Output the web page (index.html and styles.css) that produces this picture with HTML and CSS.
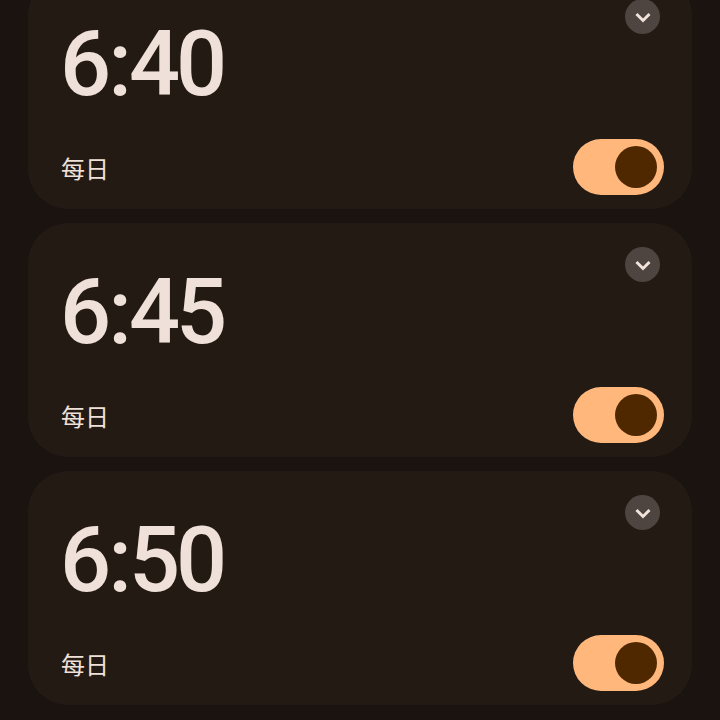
FILE: index.html
```html
<!DOCTYPE html>
<html lang="zh">
<head>
  <meta charset="UTF-8" />
  <meta name="viewport" content="width=device-width, initial-scale=1" />
  <title>闹钟</title>
  <link rel="stylesheet" href="styles.css">
</head>
<body>
  <div class="alarm-list">
    <div class="alarm-card">
      <div class="alarm-top">
        <div class="alarm-time">6<span class="colon">:</span>40</div>
        <button class="expand-btn" title="展开">
          <svg width="20" height="20" viewBox="0 0 20 20"><path d="M3.5 7 L10 13.5 L16.5 7" fill="none" stroke="#f1e2da" stroke-width="3"/></svg>
        </button>
      </div>
      <div class="alarm-bottom">
        <span class="alarm-days">每日</span>
        <div class="toggle on"><div class="thumb"></div></div>
      </div>
    </div>

    <div class="alarm-card">
      <div class="alarm-top">
        <div class="alarm-time">6<span class="colon">:</span>45</div>
        <button class="expand-btn" title="展开">
          <svg width="20" height="20" viewBox="0 0 20 20"><path d="M3.5 7 L10 13.5 L16.5 7" fill="none" stroke="#f1e2da" stroke-width="3"/></svg>
        </button>
      </div>
      <div class="alarm-bottom">
        <span class="alarm-days">每日</span>
        <div class="toggle on"><div class="thumb"></div></div>
      </div>
    </div>

    <div class="alarm-card">
      <div class="alarm-top">
        <div class="alarm-time">6<span class="colon">:</span>50</div>
        <button class="expand-btn" title="展开">
          <svg width="20" height="20" viewBox="0 0 20 20"><path d="M3.5 7 L10 13.5 L16.5 7" fill="none" stroke="#f1e2da" stroke-width="3"/></svg>
        </button>
      </div>
      <div class="alarm-bottom">
        <span class="alarm-days">每日</span>
        <div class="toggle on"><div class="thumb"></div></div>
      </div>
    </div>
  </div>
</body>
</html>
```

FILE: styles.css
```css
body {
  margin: 0;
  background: #1a130f;
  color: #efe1d9;
  font-family: "Roboto", "Noto Sans CJK SC", sans-serif;
  overflow: hidden;
}

.alarm-list {
  display: flex;
  flex-direction: column;
  gap: 14px;
  padding: 0 28px;
  margin-top: -25px;
}

.alarm-card {
  background: #241a14;
  border-radius: 40px;
  height: 234px;
  box-sizing: border-box;
  padding: 24px 28px 14px 32px;
  display: flex;
  flex-direction: column;
  justify-content: space-between;
}

.alarm-top {
  display: flex;
  justify-content: space-between;
  align-items: flex-start;
}

.alarm-time {
  font-size: 90px;
  line-height: 1;
  font-weight: 500;
  letter-spacing: -4px;
  margin-top: 21px;
}

.colon {
  margin: 0 1px;
}

.expand-btn {
  width: 35px;
  height: 35px;
  border-radius: 50%;
  border: none;
  padding: 0;
  background: #4e4540;
  display: flex;
  align-items: center;
  justify-content: center;
  margin-right: 4px;
}

.alarm-bottom {
  display: flex;
  justify-content: space-between;
  align-items: center;
}

.alarm-days {
  font-family: "Noto Sans CJK SC", sans-serif;
  font-size: 24px;
  margin-left: 1px;
}

.toggle {
  width: 91px;
  height: 56px;
  border-radius: 28px;
  background: #ffb77c;
  display: flex;
  align-items: center;
  justify-content: flex-end;
  padding: 0 7px;
  box-sizing: border-box;
}

.thumb {
  width: 42px;
  height: 42px;
  border-radius: 50%;
  background: #4f2800;
}
```
